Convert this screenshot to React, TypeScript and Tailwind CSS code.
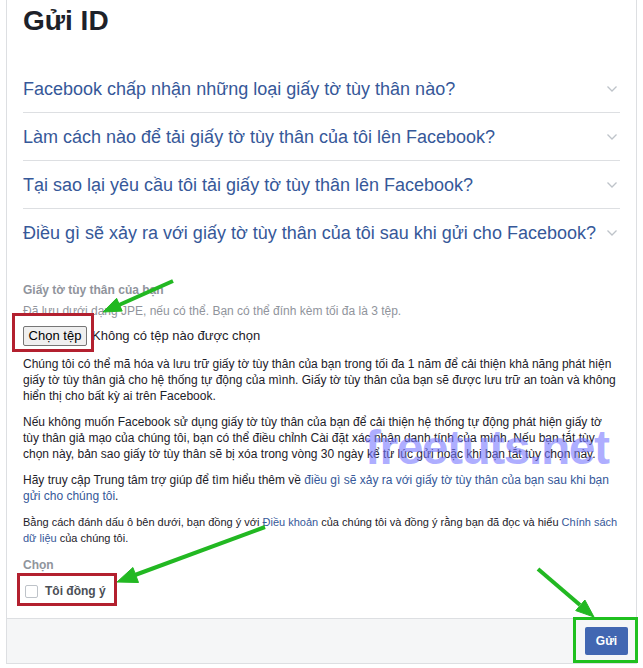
import React from "react";

const Chevron = () => (
  <svg width="12" height="8" viewBox="0 0 12 8" className="shrink-0">
    <path d="M1.5 1.5 L6 6 L10.5 1.5" fill="none" stroke="#bec3c9" strokeWidth="1.3" />
  </svg>
);

const questions = [
  "Facebook chấp nhận những loại giấy tờ tùy thân nào?",
  "Làm cách nào để tải giấy tờ tùy thân của tôi lên Facebook?",
  "Tại sao lại yêu cầu tôi tải giấy tờ tùy thân lên Facebook?",
  "Điều gì sẽ xảy ra với giấy tờ tùy thân của tôi sau khi gửi cho Facebook?",
];

export default function App() {
  return (
    <div className="relative w-[643px] h-[668px] bg-white overflow-hidden font-['Liberation_Sans',Arial,sans-serif]">
      <div className="ml-[6px] w-[631px] border-x border-b border-[#dddfe2] bg-white">
        <div className="px-4 pt-[5px]">
          <h1 className="text-[28px] leading-[32px] font-bold text-[#1d2129]">Gửi ID</h1>

          <div className="mt-[28px]">
            {questions.map((q, i) => (
              <div
                key={i}
                className={`flex items-center justify-between h-[48px] ${i < 3 ? "border-b border-[#dddfe2]" : ""}`}
              >
                <span className="text-[18px] leading-[22px] text-[#365899]">{q}</span>
                <span className="mr-[2px]">
                  <Chevron />
                </span>
              </div>
            ))}
          </div>

          <div className="mt-[25px] text-[12px] leading-[16px] font-bold text-[#90949c]">
            Giấy tờ tùy thân của bạn
          </div>
          <div className="mt-[5px] text-[12px] leading-[16px] text-[#90949c]">
            Đã lưu dưới dạng JPE, nếu có thể. Bạn có thể đính kèm tối đa là 3 tệp.
          </div>
          <div className="mt-[7px] flex items-center">
            <span className="h-[20px] w-[64px] flex items-center justify-center bg-[#efefef] border border-[#767676] rounded-[2px] text-[13px] text-black">
              Chọn tệp
            </span>
            <span className="ml-[5px] text-[13px] text-[#1d2129]">Không có tệp nào được chọn</span>
          </div>

          <p className="mt-[10px] text-[12px] leading-[16px] text-[#1d2129] whitespace-nowrap">
            Chúng tôi có thể mã hóa và lưu trữ giấy tờ tùy thân của bạn trong tối đa 1 năm để cải thiện khả năng phát hiện
            <br />
            giấy tờ tùy thân giả cho hệ thống tự động của mình. Giấy tờ tùy thân của bạn sẽ được lưu trữ an toàn và không
            <br />
            hiển thị cho bất kỳ ai trên Facebook.
          </p>
          <p className="mt-[10px] text-[12px] leading-[16px] text-[#1d2129] whitespace-nowrap">
            Nếu không muốn Facebook sử dụng giấy tờ tùy thân của bạn để cải thiện hệ thống tự động phát hiện giấy tờ
            <br />
            tùy thân giả mạo của chúng tôi, bạn có thể điều chỉnh Cài đặt xác nhận danh tính của mình. Nếu bạn tắt tùy
            <br />
            chọn này, bản sao giấy tờ tùy thân sẽ bị xóa trong vòng 30 ngày kể từ lúc gửi hoặc khi bạn tắt tùy chọn này.
          </p>
          <p className="mt-[10px] text-[12px] leading-[16px] text-[#1d2129] whitespace-nowrap">
            Hãy truy cập Trung tâm trợ giúp để tìm hiểu thêm về{" "}
            <span className="text-[#365899]">điều gì sẽ xảy ra với giấy tờ tùy thân của bạn sau khi bạn</span>
            <br />
            <span className="text-[#365899]">gửi cho chúng tôi</span>.
          </p>
          <p className="mt-[10px] text-[11px] leading-[16px] text-[#1d2129] whitespace-nowrap">
            Bằng cách đánh dấu ô bên dưới, bạn đồng ý với <span className="text-[#365899]">Điều khoản</span> của chúng tôi
            và đồng ý rằng bạn đã đọc và hiểu <span className="text-[#365899]">Chính sách</span>
            <br />
            <span className="text-[#365899]">dữ liệu</span> của chúng tôi.
          </p>

          <div className="mt-[11px] text-[12px] leading-[16px] font-bold text-[#90949c]">Chọn</div>
          <div className="mt-[10px] flex items-center h-[16px] pl-[2px]">
            <span className="w-[13px] h-[13px] border border-[#bec3c9] rounded-[2px] bg-white" />
            <span className="ml-[7px] text-[12px] font-bold text-[#4b4f56]">Tôi đồng ý</span>
          </div>
          <div className="h-[19px]" />
        </div>

        <div className="h-[45px] border-t border-[#dddfe2] bg-[#f5f6f7] flex items-center justify-end pr-[8px]">
          <span className="h-[28px] w-[43px] flex items-center justify-center rounded-[2px] bg-[#4267b2] text-white text-[12px] font-bold">
            Gửi
          </span>
        </div>
      </div>

      {/* watermark */}
      <div className="absolute left-[365px] top-[424px] text-[48px] leading-none font-bold tracking-[-1.5px] text-[rgba(120,120,255,0.6)] pointer-events-none">
        freetuts.net
      </div>

      {/* annotation boxes */}
      <div className="absolute left-[12px] top-[313px] w-[82px] h-[39px] border-[3px] border-[#b3202f] pointer-events-none" />
      <div className="absolute left-[17px] top-[573px] w-[100px] h-[33px] border-[3px] border-[#b3202f] pointer-events-none" />
      <div className="absolute left-[573px] top-[617px] w-[65px] h-[46px] border-[3px] border-[#1fc01f] pointer-events-none" />

      {/* arrows */}
      <svg className="absolute inset-0 pointer-events-none" width="643" height="668" viewBox="0 0 643 668">
        <g fill="#22b822" stroke="#22b822">
          <line x1="173" y1="281" x2="119" y2="305" strokeWidth="4" />
          <polygon points="103,312 122.2,311.1 116.6,298.3" strokeWidth="1" />
          <line x1="265" y1="527" x2="135" y2="575" strokeWidth="4" />
          <polygon points="117,582 138.5,582.5 132.9,567.5" strokeWidth="1" />
          <line x1="538" y1="569" x2="580" y2="605" strokeWidth="4" />
          <polygon points="594,617 575.7,610.6 584.9,600" strokeWidth="1" />
        </g>
      </svg>
    </div>
  );
}
